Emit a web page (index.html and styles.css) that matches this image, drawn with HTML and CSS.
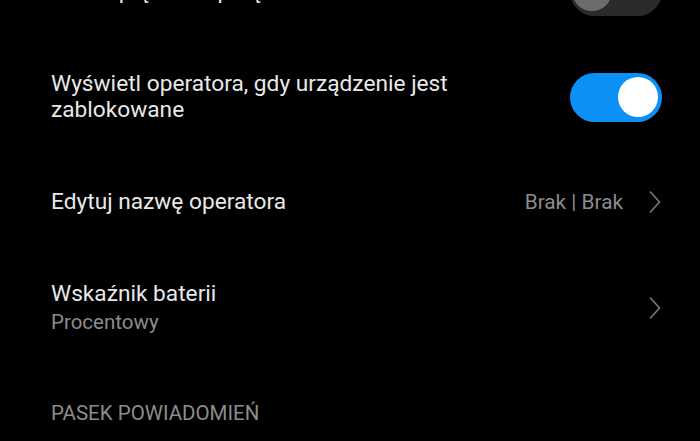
FILE: index.html
```html
<!DOCTYPE html>
<html lang="pl">
<head>
<meta charset="utf-8">
<link rel="stylesheet" href="styles.css">
</head>
<body>
<div class="list">
  <div class="row row-first">
    <div class="texts"><div class="title">Pokaż prędkość połączenia</div></div>
    <div class="toggle off"><span class="knob"></span></div>
  </div>
  <div class="row">
    <div class="texts"><div class="title">Wyświetl operatora, gdy urządzenie jest zablokowane</div></div>
    <div class="toggle on"><span class="knob"></span></div>
  </div>
  <div class="row row-short">
    <div class="texts"><div class="title">Edytuj nazwę operatora</div></div>
    <div class="value">Brak | Brak</div>
    <svg class="chev" width="12" height="24" viewBox="0 0 12 24"><polyline points="1,1.5 10.5,12 1,22.5" fill="none" stroke="#7a7a7a" stroke-width="1.6"/></svg>
  </div>
  <div class="row row-tall">
    <div class="texts">
      <div class="title">Wskaźnik baterii</div>
      <div class="sub">Procentowy</div>
    </div>
    <svg class="chev" width="12" height="24" viewBox="0 0 12 24"><polyline points="1,1.5 10.5,12 1,22.5" fill="none" stroke="#7a7a7a" stroke-width="1.6"/></svg>
  </div>
  <div class="header">PASEK POWIADOMIEŃ</div>
</div>
</body>
</html>
```
FILE: styles.css
```css
html, body {
  margin: 0;
  padding: 0;
  background: #000;
}
body {
  width: 700px;
  height: 441px;
  overflow: hidden;
  font-family: Roboto, "Noto Sans", sans-serif;
}
.list {
  padding: 0 38px 0 51px;
}
.row {
  height: 106px;
  display: flex;
  align-items: center;
}
.row-first {
  margin-top: -62px;
}
.row-short {
  height: 104px;
}
.row-tall {
  height: 108px;
}
.texts {
  flex: 1;
  min-width: 0;
}
.title {
  color: #e8e8e8;
  font-size: 22.7px;
  line-height: 26px;
  max-width: 420px;
}
.sub {
  color: #8c8c8c;
  font-size: 20.5px;
  line-height: 26px;
  margin-top: 2px;
}
.value {
  color: #8c8c8c;
  font-size: 20.8px;
  margin-right: 26px;
}
.chev {
  display: block;
  margin-right: 1px;
}
.toggle {
  width: 92px;
  height: 49px;
  border-radius: 25px;
  box-sizing: border-box;
  padding: 4px;
  display: flex;
  align-items: center;
}
.toggle.on {
  background: #0b90f6;
  justify-content: flex-end;
}
.toggle.off {
  background: #2b2b2b;
  justify-content: flex-start;
}
.knob {
  width: 40px;
  height: 40px;
  border-radius: 50%;
  display: block;
}
.toggle.on .knob {
  background: #fff;
}
.toggle.off .knob {
  background: #6c6c6c;
  margin-left: -2px;
}
.header {
  color: #8c8c8c;
  font-size: 20.5px;
  padding-top: 39px;
  line-height: 24px;
}
```
